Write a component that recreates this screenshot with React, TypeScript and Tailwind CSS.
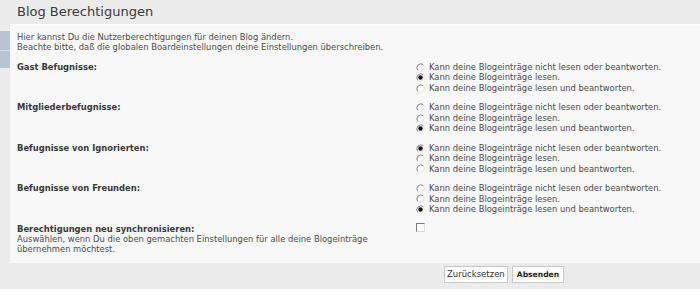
import type { ReactNode } from 'react'

const OPTIONS = [
  'Kann deine Blogeinträge nicht lesen oder beantworten.',
  'Kann deine Blogeinträge lesen.',
  'Kann deine Blogeinträge lesen und beantworten.',
]

const GROUPS = [
  { label: 'Gast Befugnisse:', checked: 1 },
  { label: 'Mitgliederbefugnisse:', checked: 2 },
  { label: 'Befugnisse von Ignorierten:', checked: 0 },
  { label: 'Befugnisse von Freunden:', checked: 2 },
]

// old-school sunken radio, drawn so it looks the same in every browser
function Radio({ on }: { on: boolean }) {
  return (
    <svg width="9" height="9" viewBox="0 0 9 9" className="shrink-0">
      <circle cx="4.5" cy="4.5" r="4" fill="#fff" />
      <path d="M1.7 7.3 A4 4 0 0 1 7.3 1.7" fill="none" stroke="#7a7a7a" strokeWidth="1" />
      <path d="M7.3 1.7 A4 4 0 0 1 1.7 7.3" fill="none" stroke="#e2e2e2" strokeWidth="1" />
      {on && <circle cx="4.5" cy="4.5" r="2.2" fill="#111" />}
    </svg>
  )
}

function Row({ label, children }: { label: ReactNode; children: ReactNode }) {
  return (
    <div className="grid grid-cols-[399px_1fr]">
      <div>{label}</div>
      <div>{children}</div>
    </div>
  )
}

export default function App() {
  return (
    <div className="h-[298px] w-[700px] bg-white font-['DejaVu_Sans',Verdana,sans-serif] text-[8.4px] leading-[10.4px] text-[#4a4a4a]">
      <div className="bg-[#ebebeb]">
        <h2 className="h-[24px] pl-[17px] pt-[4px] text-[13px] leading-[16px] text-[#3a3a3a]">
          Blog Berechtigungen
        </h2>
        <div className="flex">
          {/* side tabs */}
          <div className="w-[10px] shrink-0 pt-[7px]">
            <div className="h-[19px] bg-[#b8c5d0]" />
            <div className="h-[1px] bg-[#d6dee4]" />
            <div className="h-[17px] bg-[#b8c5d0]" />
          </div>
          <div className="flex flex-1 flex-col gap-[9.2px] border-t border-[#fcfcfc] bg-[#f8f8f8] pb-[8px] pl-[7px] pt-[7px]">
            <p>
              Hier kannst Du die Nutzerberechtigungen für deinen Blog ändern.
              <br />
              Beachte bitte, daß die globalen Boardeinstellungen deine Einstellungen überschreiben.
            </p>
            {GROUPS.map((g) => (
              <Row key={g.label} label={<b className="text-[#383838]">{g.label}</b>}>
                {OPTIONS.map((o, i) => (
                  <div key={o} className="flex items-center gap-[4px]">
                    <Radio on={i === g.checked} />
                    <span>{o}</span>
                  </div>
                ))}
              </Row>
            ))}
            <Row
              label={
                <>
                  <b className="text-[#383838]">Berechtigungen neu synchronisieren:</b>
                  <br />
                  Auswählen, wenn Du die oben gemachten Einstellungen für alle deine Blogeinträge
                  <br />
                  übernehmen möchtest.
                </>
              }
            >
              <div className="mt-[-1px] h-[9px] w-[9px] border border-t-[#7a7a7a] border-l-[#7a7a7a] border-r-[#dcdcdc] border-b-[#dcdcdc] bg-white" />
            </Row>
          </div>
        </div>
        <div className="flex gap-[4px] pb-[6px] pl-[444px] pt-[3px]">
          <button type="button" className="h-[17px] border border-[#c8c8c8] bg-white px-[2px] text-[8.5px] leading-[15px] text-[#333]">
            Zurücksetzen
          </button>
          <button type="button" className="h-[17px] border border-[#c8c8c8] bg-white px-[4px] text-[7.6px] font-bold leading-[15px] text-[#222]">
            Absenden
          </button>
        </div>
      </div>
    </div>
  )
}
